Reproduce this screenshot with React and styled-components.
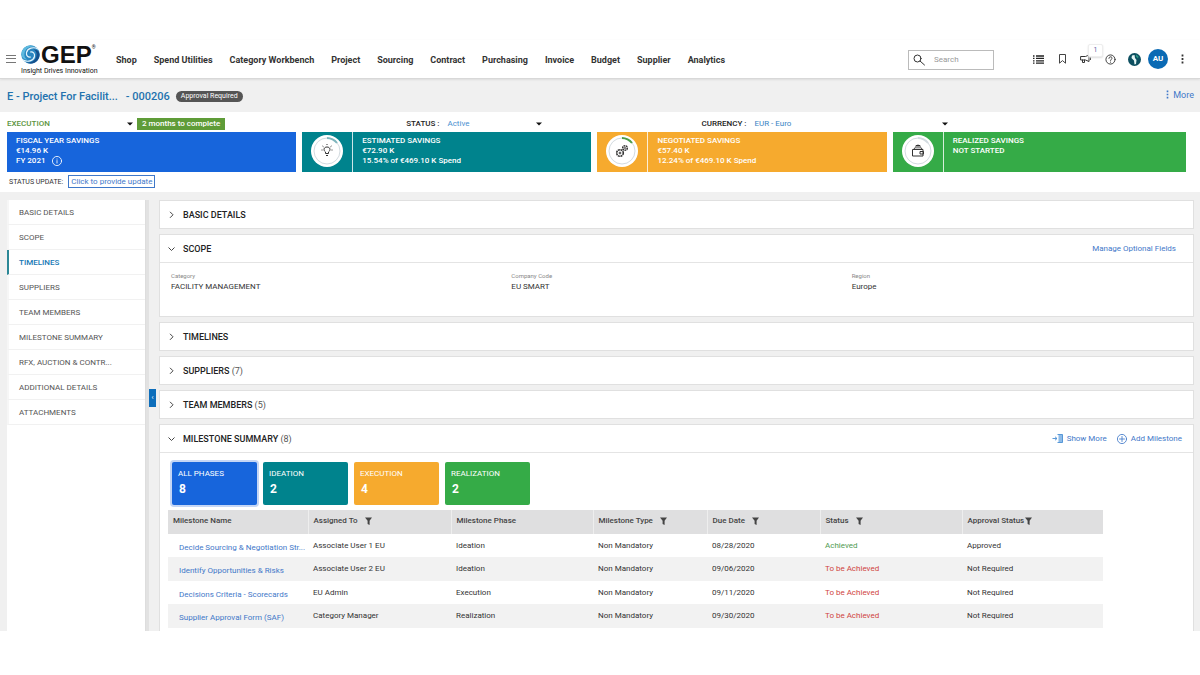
import React from "react";
import styled, { createGlobalStyle } from "styled-components";

const color = {
  link: "#3f78c9",
  heading: "#2372ae",
  text: "#333",
  blue: "#1765dc",
  teal: "#00838d",
  amber: "#f6aa2e",
  green: "#35ab47",
  grey: "#f0f0f0",
};

const GlobalStyle = createGlobalStyle`
  *, *::before, *::after { box-sizing: border-box; }
  body {
    margin: 0;
    background: #fff;
    color: ${color.text};
    font: 400 8px/12px Roboto, "Liberation Sans", sans-serif;
  }
  button, input, select { font: inherit; color: inherit; }
  button { border: 0; padding: 0; background: none; cursor: pointer; }
  a { text-decoration: none; color: inherit; }
  h1, h2, p, ul, dl, dd { margin: 0; padding: 0; }
  ul { list-style: none; }
  svg { display: block; flex: none; }
`;

const Page = styled.div`
  padding: 40px 0 44px;
`;

/* Top bar */
const TopBar = styled.header`
  display: flex;
  align-items: center;
  height: 39px;
  padding: 0 6px;
  border-bottom: 1px solid #d8d8d8;
  box-shadow: 0 1px 2px #dcdcdc;
  position: relative;
`;

const Logo = styled.a`
  display: block;
  width: 80px;
  margin: 0 15px 0 5px;
  color: #111;
`;

const LogoMark = styled.span`
  display: flex;
  align-items: center;
  height: 22px;
`;

const LogoName = styled.span`
  font: 700 24px/22px "Liberation Sans", Arial, sans-serif;
`;

const Registered = styled.span`
  align-self: flex-start;
  font-size: 5px;
  line-height: 6px;
`;

const Tagline = styled.span`
  display: block;
  padding-top: 1px;
  font: 400 7px/8px Roboto, sans-serif;
  white-space: nowrap;
`;

const MainNav = styled.nav`
  display: flex;
  gap: 17px;
  flex: 1;
  padding-top: 2px;
  font-size: 9px;
  font-weight: 700;
  color: #333;
  white-space: nowrap;
`;

const SearchBox = styled.label`
  display: flex;
  align-items: center;
  gap: 9px;
  width: 86px;
  height: 20px;
  padding: 0 4px;
  margin: 2px 32px 0 0;
  border: 1px solid #bbb;
`;

const SearchInput = styled.input`
  width: 48px;
  border: 0;
  padding: 0;
  outline: 0;
  background: none;
  &::placeholder { color: #999; opacity: 1; }
`;

const Tools = styled.div`
  display: flex;
  align-items: center;
`;

const ToolButton = styled.button`
  display: flex;
  justify-content: center;
  align-items: center;
  width: 24px;
  height: 24px;
  position: relative;
`;

const CountBadge = styled.span`
  position: absolute;
  top: -3px;
  left: 14px;
  width: 15px;
  height: 13px;
  background: #fff;
  border: 1px solid #eee;
  border-radius: 2px;
  box-shadow: 0 1px 2px #ddd;
  color: #66a;
  font-size: 7px;
  line-height: 11px;
`;

const Avatar = styled.span`
  width: 20px;
  height: 20px;
  border-radius: 50%;
  background: #0a6ab4;
  color: #fff;
  font-weight: 700;
  line-height: 20px;
`;

/* Project title */
const TitleBar = styled.div`
  display: flex;
  align-items: center;
  height: 33px;
  padding: 2px 6px 0 7px;
  background: ${color.grey};
`;

const Title = styled.h1`
  display: flex;
  gap: 8px;
  font-size: 11px;
  font-weight: 500;
  color: ${color.heading};
`;

const Pill = styled.span`
  margin-left: 6px;
  padding: 0 5px;
  border-radius: 6px;
  background: #555;
  color: #fff;
  font-size: 7px;
  line-height: 11px;
`;

const IconButton = styled.button`
  display: inline-flex;
  align-items: center;
  gap: 4px;
  color: ${color.link};
`;

const MoreButton = styled(IconButton)`
  margin-left: auto;
  padding-bottom: 4px;
  font-size: 9px;
`;

/* Summary strip */
const Summary = styled.section`
  padding: 3px 14px 4px 7px;
`;

const SummaryGrid = styled.div`
  display: grid;
  grid-template-columns: 289fr 289fr 289fr 293fr;
  column-gap: 6px;
`;

const Filter = styled.div`
  display: flex;
  align-items: center;
  height: 17px;
  gap: 8px;
  padding-left: ${(p) => (p.$indent ? 104 : 0)}px;
  grid-column: span ${(p) => p.$span || 1};
`;

const FilterLabel = styled.label`
  font-weight: 500;
  color: #222;
`;

const SelectWrap = styled.span`
  display: grid;
  align-items: center;
  width: ${(p) => p.$width}px;
  color: ${(p) => p.$color};
  font-weight: ${(p) => p.$weight};
  & > * { grid-area: 1 / 1; }
  & > svg { justify-self: end; pointer-events: none; }
`;

const Select = styled.select`
  appearance: none;
  width: 100%;
  border: 0;
  padding: 0;
  background: none;
  line-height: 12px;
`;

const Deadline = styled.span`
  margin: 0 0 2px -4px;
  padding: 0 5px;
  background: #5f9c38;
  color: #fff;
  font-weight: 500;
  line-height: 12px;
  align-self: flex-end;
  white-space: nowrap;
`;

const SavingsCard = styled.div`
  display: flex;
  height: 40px;
  background: ${(p) => p.$bg};
  color: #fff;
`;

const SavingsIcon = styled.div`
  display: flex;
  align-items: center;
  justify-content: center;
  width: 51px;
  padding-bottom: 2px;
  border-right: 1px solid #ffffffcc;
`;

const SavingsText = styled.div`
  padding: 4px 9px;
  font-weight: 500;
  line-height: 10px;
  & > p { display: flex; align-items: center; gap: 7px; }
`;

const StatusUpdate = styled.div`
  display: flex;
  align-items: center;
  gap: 5px;
  padding: 3px 2px 0;
  font-size: 7px;
`;

const UpdateButton = styled.button`
  padding: 0 2px;
  border: 1px solid ${color.link};
  color: ${color.link};
  font-size: 8px;
  line-height: 11px;
`;

/* Body */
const Body = styled.div`
  display: flex;
  padding: 8px 6px 0 7px;
  background: ${color.grey};
`;

const SideNav = styled.nav`
  width: 139px;
  background: #fff;
  border-right: 1px solid #ddd;
`;

const SideLink = styled.a`
  display: block;
  height: 25px;
  padding: 0 10px;
  border-left: 2px solid ${(p) => (p.$active ? "#2b8796" : "#f6f6f6")};
  border-bottom: 1px solid #f1f1f1;
  color: ${(p) => (p.$active ? "#1678b5" : "#555")};
  font-weight: ${(p) => (p.$active ? 500 : 400)};
  line-height: 26px;
`;

const Gutter = styled.div`
  width: 13px;
  border-left: 3px solid #e2e2e2;
`;

const Handle = styled.button`
  display: block;
  width: 7px;
  height: 18px;
  margin-top: 189px;
  background: #0d6ebb;
  color: #fff;
  font-size: 7px;
  line-height: 18px;
`;

const Panels = styled.main`
  display: flex;
  flex-direction: column;
  gap: 5px;
  flex: 1;
  min-width: 0;
`;

const Panel = styled.section`
  background: #fff;
  border: 1px solid #e0e0e0;
  border-bottom-width: ${(p) => (p.$last ? 0 : 1)}px;
`;

const PanelHead = styled.div`
  display: flex;
  align-items: center;
  justify-content: space-between;
  height: 27px;
  padding: 0 ${(p) => p.$right || 17}px 0 8px;
`;

const PanelToggle = styled.button`
  display: flex;
  align-items: center;
  gap: 8px;
  color: #222;
`;

const PanelTitle = styled.h2`
  font-size: 9px;
  font-weight: 500;
  line-height: 12px;
  & > span { font-weight: 400; color: #555; }
`;

const Actions = styled.div`
  display: flex;
  gap: 10px;
`;

const Fields = styled.dl`
  display: grid;
  grid-template-columns: repeat(3, 1fr);
  height: 54px;
  padding: 9px 1px 0 11px;
  border-top: 1px solid #e4e4e4;
`;

const FieldLabel = styled.dt`
  color: #888;
  font-size: 6px;
  line-height: 8px;
`;

const FieldValue = styled.dd`
  line-height: 14px;
`;

const MilestoneBody = styled.div`
  padding: 9px 90px 3px 8px;
  border-top: 1px solid #e4e4e4;
`;

const Phases = styled.div`
  display: flex;
  gap: 6px;
  padding: 0 4px 5px;
`;

const Phase = styled.button`
  width: 85px;
  height: 43px;
  padding: 0 6px 4px;
  border-radius: 2px;
  background: ${(p) => p.$bg};
  box-shadow: ${(p) => (p.$selected ? "0 0 0 2px #c5d6f5" : "none")};
  color: #fff;
  text-align: left;
`;

const PhaseCount = styled.strong`
  display: block;
  padding: 2px 1px 0;
  font-size: 12px;
  line-height: 14px;
`;

const Table = styled.table`
  width: 100%;
  table-layout: fixed;
  border-collapse: collapse;
  white-space: nowrap;
`;

const Col = styled.col`
  width: ${(p) => p.$width}px;
`;

const HeadCell = styled.th`
  height: 24px;
  padding: 0 5px 2px;
  background: #dfdfe0;
  border-right: 1px solid #eee;
  color: #444;
  font-weight: 500;
  text-align: left;
  &:last-child { border-right: 0; }
`;

const HeadContent = styled.span`
  display: flex;
  align-items: center;
  gap: ${(p) => (p.$tight ? 1 : 7)}px;
`;

const Row = styled.tr`
  height: 23px;
  background: #fff;
  &:nth-child(even) { height: 24px; background: #f2f2f2; }
`;

const Cell = styled.td`
  padding: 0 5px;
  color: ${(p) => p.$color || color.text};
`;

const NameCell = styled(Cell)`
  padding: 4px 0 0 11px;
  overflow: hidden;
`;

const MilestoneLink = styled.a`
  color: ${color.link};
`;

/* Icons */
const Line = ({ size = 12, width = size, w = 1.4, children }) => (
  <svg width={width} height={size} viewBox="0 0 24 24" fill="none" stroke="currentColor"
    strokeWidth={w} strokeLinecap="round" strokeLinejoin="round" aria-hidden="true">
    {children}
  </svg>
);

const Caret = () => (
  <svg width="6" height="4" viewBox="0 0 6 4" aria-hidden="true">
    <path d="M0 0.5h6L3 3.6z" fill="#111" />
  </svg>
);

const Funnel = () => (
  <svg width="7" height="8" viewBox="0 0 7 8" aria-hidden="true">
    <path d="M0 0.5h7L4.6 3.8V8L2.6 7V3.8z" fill="#444" />
  </svg>
);

const Chevron = ({ open }) => (
  <svg width="7" height="8" viewBox="0 0 7 8" fill="none" stroke="#444" aria-hidden="true">
    <path d={open ? "M0.5 2.5l3 3 3-3" : "M2 0.8l3 3-3 3"} />
  </svg>
);

const VerticalDots = ({ size = 10 }) => (
  <svg width="3" height={size} viewBox="0 0 3 10" fill="currentColor" aria-hidden="true">
    <path d="M.6 .6h1.8v1.8H.6zM.6 4.1h1.8v1.8H.6zM.6 7.6h1.8v1.8H.6z" />
  </svg>
);

const Swirl = () => (
  <svg width="20" height="21" viewBox="0 0 40 42" fill="none" strokeLinecap="round" aria-hidden="true">
    <circle cx="19" cy="21" r="18.500" fill="#2a86c0" />
    <path d="M1 18C3 6 16-1 28 5c-12-1-20 5-21 14-1 6 2 10 6 12C5 31 0 26 1 18z" fill="#5db9de" />
    <path d="M37 24c-2 12-15 19-27 13 12 1 20-5 21-14 1-6-2-10-6-12 8 0 13 5 12 13z" fill="#15508c" />
    <path d="M34 10C25 5 13 8 11 17c-1 6 3 10 8 9" stroke="#e6f4fb" strokeWidth="2.400" />
    <path d="M4 32c9 5 21 2 23-7 1-6-3-10-8-9" stroke="#e6f4fb" strokeWidth="2.400" />
  </svg>
);

const MenuIcon = () => (
  <svg width="10" height="8" viewBox="0 0 10 8" stroke="#777" aria-hidden="true">
    <path d="M0 .5h10M0 3.5h10M0 7.5h10" />
  </svg>
);

const SearchIcon = () => (
  <Line size={12} w={2}><circle cx="9" cy="9" r="7" /><path d="M14 14l9 8" /></Line>
);

const ListIcon = () => (
  <svg width="11" height="9" viewBox="0 0 11 9" stroke="#222" strokeWidth="1.3" aria-hidden="true">
    <path d="M0 1h1.5M3 1h8M0 3.4h1.5M3 3.4h8M0 5.8h1.5M3 5.8h8M0 8.2h1.5M3 8.2h8" />
  </svg>
);

const BookmarkIcon = () => (
  <svg width="7" height="10" viewBox="0 0 7 10" fill="none" stroke="#444" aria-hidden="true">
    <path d="M.5.5h6v8.7l-3-2.6-3 2.6z" />
  </svg>
);

const MegaphoneIcon = () => (
  <Line size={12} w={2}>
    <path d="M2 7h9l7-3v13l-7-3H2zM5 14v5h4v-5M21 9v4" />
  </Line>
);

const HelpIcon = () => (
  <Line size={11} w={2}>
    <circle cx="12" cy="12" r="10" />
    <path d="M8.5 9.5c0-5 7-4 7-.5 0 2.500-3.500 2.500-3.500 5M12 17.500v.5" />
  </Line>
);

const GlobeIcon = () => (
  <svg width="13" height="13" viewBox="0 0 26 26" aria-hidden="true">
    <circle cx="13" cy="13" r="13" fill="#0d4f60" />
    <path d="M8 5l5-1 1 6 3 4-1 8-3 1-1-8-5-5z" fill="#e4f5f3" />
    <path d="M16 3l5 4-1 4-4-4z" fill="#2b9a86" />
  </svg>
);

const InfoIcon = () => (
  <Line size={10} w={2}><circle cx="12" cy="12" r="11" /><path d="M12 11v6M12 7v.5" /></Line>
);

const ShowMoreIcon = () => (
  <svg width="11" height="9" viewBox="0 0 22 18" fill="none" stroke="#4b8fd4" strokeWidth="1.8" aria-hidden="true">
    <path d="M13 1h8v16h-8z" fill="#8dbbe8" stroke="none" />
    <path d="M11 1h10v16H11M1 9h9M6 5.500l4 3.500-4 3.500" />
  </svg>
);

const PlusIcon = () => (
  <Line size={10} w={2}><circle cx="12" cy="12" r="11" /><path d="M12 6v12M6 12h12" /></Line>
);

const dialDrawings = {
  bulb: (
    <path d="M14.500 18.500v-1.500c-2.400-1.800-1.800-5 1.500-5s3.900 3.200 1.500 5v1.500zM15 20.500h2M16 9v1M11.500 11l1 .8M20.500 11l-1 .8M10.500 15h1M20.500 15h1" />
  ),
  gears: (
    <>
      <circle cx="14" cy="18" r="3.300" strokeDasharray="2 .6" strokeWidth="1.600" />
      <circle cx="14" cy="18" r=".9" />
      <circle cx="19" cy="13" r="2.300" strokeDasharray="1.600 .5" strokeWidth="1.500" />
      <circle cx="19" cy="13" r=".5" />
    </>
  ),
  wallet: (
    <>
      <path d="M10.500 14.500h10.500v6.500h-10.500zM18 16.500h3.500v2.500h-3.500z" />
      <path d="M14 13.500v-3h4v3M16 9.500v4M12 14l1-1.500M20 14l-1-1.500" />
    </>
  ),
};

const Dial = ({ kind, arc }) => (
  <svg width="32" height="32" viewBox="0 0 32 32" fill="none" aria-hidden="true">
    <circle cx="16" cy="16" r="16" fill="#fff" />
    <circle cx="16" cy="16" r="13" stroke="#d3dbe0" />
    <path d="M16 3a13 13 0 0 1 10 5" stroke={arc} strokeWidth="2" />
    <g stroke="#333" strokeWidth="1">{dialDrawings[kind]}</g>
  </svg>
);

/* Data */
const navItems = ["Shop", "Spend Utilities", "Category Workbench", "Project", "Sourcing",
  "Contract", "Purchasing", "Invoice", "Budget", "Supplier", "Analytics"];

const sideItems = ["BASIC DETAILS", "SCOPE", "TIMELINES", "SUPPLIERS", "TEAM MEMBERS",
  "MILESTONE SUMMARY", "RFX, AUCTION & CONTR...", "ADDITIONAL DETAILS", "ATTACHMENTS"];

const savings = [
  { bg: color.teal, kind: "bulb", arc: "#7fb5bd", lines: ["ESTIMATED SAVINGS", "€72.90 K", "15.54% of €469.10 K Spend"] },
  { bg: color.amber, kind: "gears", arc: "#4d9c4a", lines: ["NEGOTIATED SAVINGS", "€57.40 K", "12.24% of €469.10 K Spend"] },
  { bg: color.green, kind: "wallet", arc: "#d3dbe0", lines: ["REALIZED SAVINGS", "NOT STARTED"] },
];

const fields = [
  ["Category", "FACILITY MANAGEMENT"],
  ["Company Code", "EU SMART"],
  ["Region", "Europe"],
];

const phases = [
  ["ALL PHASES", 8, color.blue],
  ["IDEATION", 2, color.teal],
  ["EXECUTION", 4, color.amber],
  ["REALIZATION", 2, color.green],
];

const columns = [
  { name: "Milestone Name", width: 140 },
  { name: "Assigned To", width: 143, filter: true },
  { name: "Milestone Phase", width: 142 },
  { name: "Milestone Type", width: 114, filter: true },
  { name: "Due Date", width: 113, filter: true },
  { name: "Status", width: 142, filter: true },
  { name: "Approval Status", width: 141, filter: true, tight: true },
];

const milestones = [
  ["Decide Sourcing & Negotiation Str...", "Associate User 1 EU", "Ideation", "08/28/2020", "Achieved", "Approved"],
  ["Identify Opportunities & Risks", "Associate User 2 EU", "Ideation", "09/06/2020", "To be Achieved", "Not Required"],
  ["Decisions Criteria - Scorecards", "EU Admin", "Execution", "09/11/2020", "To be Achieved", "Not Required"],
  ["Supplier Approval Form (SAF)", "Category Manager", "Realization", "09/30/2020", "To be Achieved", "Not Required"],
];

function Dropdown({ id, label, value, width, tint, weight = 400 }) {
  return (
    <SelectWrap $width={width} $color={tint} $weight={weight}>
      <Select id={id} aria-label={label} defaultValue={value}>
        <option>{value}</option>
      </Select>
      <Caret />
    </SelectWrap>
  );
}

function Section({ title, count, open, actions, right, last, children }) {
  return (
    <Panel $last={last}>
      <PanelHead $right={right}>
        <PanelToggle aria-expanded={!!open}>
          <Chevron open={open} />
          <PanelTitle>{title}{count && <span> ({count})</span>}</PanelTitle>
        </PanelToggle>
        {actions}
      </PanelHead>
      {children}
    </Panel>
  );
}

export default function App() {
  return (
    <Page>
      <GlobalStyle />
      <TopBar>
        <button aria-label="Menu"><MenuIcon /></button>
        <Logo href="#home">
          <LogoMark><Swirl /><LogoName>GEP</LogoName><Registered>®</Registered></LogoMark>
          <Tagline>Insight Drives Innovation</Tagline>
        </Logo>
        <MainNav>
          {navItems.map((item) => <a key={item} href="#nav">{item}</a>)}
        </MainNav>
        <SearchBox>
          <SearchIcon />
          <SearchInput type="search" placeholder="Search" aria-label="Search" />
        </SearchBox>
        <Tools>
          <ToolButton aria-label="List"><ListIcon /></ToolButton>
          <ToolButton aria-label="Bookmarks"><BookmarkIcon /></ToolButton>
          <ToolButton aria-label="Announcements"><MegaphoneIcon /><CountBadge>1</CountBadge></ToolButton>
          <ToolButton aria-label="Help"><HelpIcon /></ToolButton>
          <ToolButton aria-label="Region"><GlobeIcon /></ToolButton>
          <ToolButton aria-label="Account"><Avatar>AU</Avatar></ToolButton>
          <ToolButton aria-label="Options"><VerticalDots /></ToolButton>
        </Tools>
      </TopBar>

      <TitleBar>
        <Title><span>E - Project For Facilit...</span><span>- 000206</span></Title>
        <Pill>Approval Required</Pill>
        <MoreButton><VerticalDots size={9} />More</MoreButton>
      </TitleBar>

      <Summary>
        <SummaryGrid>
          <Filter>
            <Dropdown label="Phase" value="EXECUTION" width={126} tint="#5b9440" weight={500} />
            <Deadline>2 months to complete</Deadline>
          </Filter>
          <Filter $indent>
            <FilterLabel htmlFor="status">STATUS :</FilterLabel>
            <Dropdown id="status" value="Active" width={95} tint="#4a90d0" />
          </Filter>
          <Filter $indent $span={2}>
            <FilterLabel htmlFor="currency">CURRENCY :</FilterLabel>
            <Dropdown id="currency" value="EUR - Euro" width={194} tint="#3a84c4" />
          </Filter>
        </SummaryGrid>
        <SummaryGrid>
          <SavingsCard $bg={color.blue}>
            <SavingsText>
              <p>FISCAL YEAR SAVINGS</p>
              <p>€14.96 K</p>
              <p>FY 2021 <InfoIcon /></p>
            </SavingsText>
          </SavingsCard>
          {savings.map((s) => (
            <SavingsCard key={s.kind} $bg={s.bg}>
              <SavingsIcon><Dial kind={s.kind} arc={s.arc} /></SavingsIcon>
              <SavingsText>{s.lines.map((l) => <p key={l}>{l}</p>)}</SavingsText>
            </SavingsCard>
          ))}
        </SummaryGrid>
        <StatusUpdate>
          <span>STATUS UPDATE:</span>
          <UpdateButton>Click to provide update</UpdateButton>
        </StatusUpdate>
      </Summary>

      <Body>
        <SideNav>
          {sideItems.map((item) => (
            <SideLink key={item} href="#section" $active={item === "TIMELINES"}>{item}</SideLink>
          ))}
        </SideNav>
        <Gutter><Handle aria-label="Collapse navigation">‹</Handle></Gutter>
        <Panels>
          <Section title="BASIC DETAILS" />
          <Section title="SCOPE" open actions={<IconButton>Manage Optional Fields</IconButton>}>
            <Fields>
              {fields.map(([label, value]) => (
                <div key={label}>
                  <FieldLabel>{label}</FieldLabel>
                  <FieldValue>{value}</FieldValue>
                </div>
              ))}
            </Fields>
          </Section>
          <Section title="TIMELINES" />
          <Section title="SUPPLIERS" count="7" />
          <Section title="TEAM MEMBERS" count="5" />
          <Section title="MILESTONE SUMMARY" count="8" open last right={11}
            actions={
              <Actions>
                <IconButton><ShowMoreIcon />Show More</IconButton>
                <IconButton><PlusIcon />Add Milestone</IconButton>
              </Actions>
            }>
            <MilestoneBody>
              <Phases>
                {phases.map(([name, count, bg], i) => (
                  <Phase key={name} $bg={bg} $selected={i === 0}>
                    {name}<PhaseCount>{count}</PhaseCount>
                  </Phase>
                ))}
              </Phases>
              <Table>
                <colgroup>{columns.map((c) => <Col key={c.name} $width={c.width} />)}</colgroup>
                <thead>
                  <tr>
                    {columns.map((c) => (
                      <HeadCell key={c.name} scope="col">
                        <HeadContent $tight={c.tight}>{c.name}{c.filter && <Funnel />}</HeadContent>
                      </HeadCell>
                    ))}
                  </tr>
                </thead>
                <tbody>
                  {milestones.map(([name, user, phase, due, status, approval]) => (
                    <Row key={name}>
                      <NameCell><MilestoneLink href="#milestone">{name}</MilestoneLink></NameCell>
                      <Cell>{user}</Cell>
                      <Cell>{phase}</Cell>
                      <Cell>Non Mandatory</Cell>
                      <Cell>{due}</Cell>
                      <Cell $color={status === "Achieved" ? "#4f9a52" : "#d0443e"}>{status}</Cell>
                      <Cell>{approval}</Cell>
                    </Row>
                  ))}
                </tbody>
              </Table>
            </MilestoneBody>
          </Section>
        </Panels>
      </Body>
    </Page>
  );
}
